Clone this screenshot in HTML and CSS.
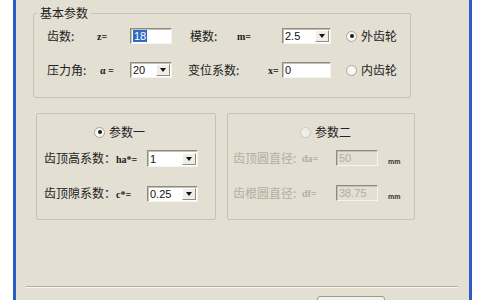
FILE: index.html
```html
<!DOCTYPE html>
<html>
<head>
<meta charset="utf-8">
<link rel="stylesheet" href="styles.css">
</head>
<body>
<div class="window">
  <fieldset class="group basic">
    <legend>基本参数</legend>
    <div class="row">
      <span class="lbl w50">齿数:</span>
      <span class="sym w33">z=</span>
      <span class="field w42"><span class="sel">18</span></span>
      <span class="lbl w47 ml18">模数:</span>
      <span class="sym w45">m=</span>
      <span class="combo w49"><span class="val">2.5</span><span class="drop"></span></span>
      <span class="radio on ml15"></span><span class="lbl rtext">外齿轮</span>
    </div>
    <div class="row">
      <span class="lbl w53">压力角:</span>
      <span class="sym w30">α =</span>
      <span class="combo w42"><span class="val">20</span><span class="drop"></span></span>
      <span class="lbl w80 ml16">变位系数:</span>
      <span class="sym w14">x=</span>
      <span class="field w49"><span class="val">0</span></span>
      <span class="radio ml15"></span><span class="lbl rtext">内齿轮</span>
    </div>
  </fieldset>

  <div class="lower">
    <div class="group p1">
      <div class="head"><span class="radio on"></span><span class="lbl rtext">参数一</span></div>
      <div class="prow first">
        <span class="lbl w103">齿顶高系数：<span class="sym">ha*=</span></span>
        <span class="combo w51 h17"><span class="val">1</span><span class="drop"></span></span>
      </div>
      <div class="prow second">
        <span class="lbl w103">齿顶隙系数：<span class="sym">c*=</span></span>
        <span class="combo w51"><span class="val">0.25</span><span class="drop"></span></span>
      </div>
    </div>
    <div class="group p2">
      <div class="head"><span class="radio dis"></span><span class="lbl rtext">参数二</span></div>
      <div class="prow first">
        <span class="lbl dtext w69">齿顶圆直径:</span>
        <span class="sym dtext w34">da=</span>
        <span class="field dfield w42"><span class="val">50</span></span>
        <span class="unit">mm</span>
      </div>
      <div class="prow second2">
        <span class="lbl dtext w69">齿根圆直径:</span>
        <span class="sym dtext w34">df=</span>
        <span class="field dfield w42"><span class="val">38.75</span></span>
        <span class="unit">mm</span>
      </div>
    </div>
  </div>

  <div class="sep"></div>
  <div class="btn"></div>
</div>
</body>
</html>
```

FILE: styles.css
```css
* { box-sizing: border-box; }
html, body { margin: 0; padding: 0; background: #ffffff; }
body {
  font-family: "Noto Sans CJK SC", sans-serif;
  font-size: 12px;
  color: #222222;
}
.window {
  margin-left: 13px;
  width: 459px;
  height: 300px;
  border-left: 3px solid #2c5dc6;
  border-right: 3px solid #2c5dc6;
  background: #e4dfd3;
  padding-top: 7px;
  overflow: hidden;
}
.group {
  border: 1px solid #c9c3b4;
  border-radius: 2px;
  margin: 0;
}
.basic {
  margin-left: 17px;
  width: 378px;
  padding: 9px 0 19px 13px;
}
legend {
  padding: 0 3px;
  margin-left: -10px;
  line-height: 12px;
  font-size: 12px;
}
.row {
  display: flex;
  align-items: center;
  height: 16px;
}
.row + .row { margin-top: 18px; }
.lbl { white-space: nowrap; line-height: 14px; }
.sym {
  font-family: "Liberation Serif", serif;
  font-size: 10px;
  font-weight: bold;
  white-space: nowrap;
}
.w14 { width: 14px; flex: none; }
.w30 { width: 30px; flex: none; }
.w33 { width: 33px; flex: none; }
.w34 { width: 34px; flex: none; }
.w42 { width: 42px; flex: none; }
.w45 { width: 45px; flex: none; }
.w47 { width: 47px; flex: none; }
.w49 { width: 49px; flex: none; }
.w50 { width: 50px; flex: none; }
.w51 { width: 51px; flex: none; }
.w53 { width: 53px; flex: none; }
.w69 { width: 69px; flex: none; }
.w80 { width: 80px; flex: none; }
.w103 { width: 103px; flex: none; }
.ml15 { margin-left: 15px; }
.ml16 { margin-left: 16px; }
.ml18 { margin-left: 18px; }

.field, .combo {
  height: 16px;
  background: #ffffff;
  border: 1px solid;
  border-color: #8e8b80 #f6f4ee #f6f4ee #8e8b80;
  box-shadow: inset 1px 1px 0 #c4c0b4;
  display: flex;
  align-items: center;
  font-family: "Liberation Sans", sans-serif;
  font-size: 11px;
  color: #111;
}
.h17 { height: 17px; }
.val { padding-left: 2px; flex: 1; }
.sel {
  background: #3169c6;
  color: #ffffff;
  margin-left: 2px;
  padding: 0 1px;
  line-height: 12px;
}
.drop {
  width: 14px;
  height: 12px;
  margin-right: 1px;
  background: #efede6;
  border: 1px solid;
  border-color: #ffffff #8e8b80 #8e8b80 #ffffff;
  display: flex;
  align-items: center;
  justify-content: center;
}
.drop::after {
  content: "";
  border-left: 3px solid transparent;
  border-right: 3px solid transparent;
  border-top: 4px solid #111;
}
.dfield {
  background: #e4dfd3;
  color: #b3ae9f;
}

.radio {
  width: 11px;
  height: 11px;
  flex: none;
  border-radius: 50%;
  border: 1px solid #a8a69c;
  background: #f7f7f3;
  display: inline-flex;
  align-items: center;
  justify-content: center;
}
.radio.on::after {
  content: "";
  width: 4px;
  height: 4px;
  border-radius: 50%;
  background: #1c1c1c;
}
.radio.dis { border-color: #c9c6bb; background: #efede6; }
.rtext { margin-left: 4px; }

.lower {
  display: flex;
  gap: 11px;
  margin: 15px 0 0 20px;
}
.p1 {
  width: 180px;
  height: 107px;
  padding: 11px 0 0 7px;
}
.p2 {
  width: 188px;
  height: 107px;
  padding: 11px 0 0 5px;
}
.head {
  display: flex;
  align-items: center;
  height: 14px;
}
.p1 .head { margin-left: 50px; }
.p2 .head { margin-left: 67px; }
.prow {
  display: flex;
  align-items: center;
}
.first { margin-top: 11px; }
.second { margin-top: 19px; }
.second2 { margin-top: 19px; }
.dtext { color: #b3ae9f; }
.unit {
  margin-left: 10px;
  margin-top: 6px;
  font-family: "Liberation Sans", sans-serif;
  font-size: 7px;
  font-weight: bold;
  color: #333;
}

.sep {
  margin: 66px 0 0 10px;
  width: 432px;
  border-top: 1px solid #b4b0a2;
  border-bottom: 1px solid #f8f6f0;
}
.btn {
  margin: 8px 0 0 301px;
  width: 68px;
  height: 22px;
  border: 1px solid #9d9a8c;
  border-radius: 3px;
  background: #f2f1ec;
}
```
